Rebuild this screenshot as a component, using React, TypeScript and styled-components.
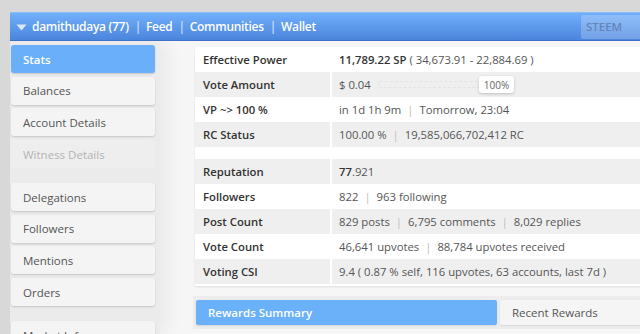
import React from "react";
import styled, { createGlobalStyle } from "styled-components";

const Global = createGlobalStyle`
  html, body { margin: 0; padding: 0; overflow: hidden; }
  body {
    background: #d8d8d8;
    font-family: "Open Sans", "Noto Sans", Arial, sans-serif;
    font-size: 11.3px;
    color: #555;
  }
`;

const Page = styled.div`
  padding: 12px 0 0 10px;
  width: 795px;
`;

const Header = styled.header`
  height: 29px;
  display: flex;
  align-items: center;
  background: linear-gradient(#72affb, #4a85dc);
  border-top: 1px solid #8cbcf6;
  border-bottom: 1px solid #3f72c8;
  color: #fff;
  font-weight: 600;
  font-size: 12px;
  letter-spacing: -0.3px;
  padding-left: 6px;
  box-sizing: border-box;
`;

const Caret = styled.svg`
  width: 11px;
  height: 7px;
  margin-right: 5px;
  margin-top: 1px;
`;

const NavSep = styled.span`
  margin: 0 5px 0 6px;
  font-weight: 400;
  color: #e4eefc;
`;

const SteemBtn = styled.div`
  margin-left: 265px;
  height: 24px;
  width: 80px;
  display: flex;
  align-items: center;
  padding-left: 5px;
  box-sizing: border-box;
  background: rgba(255, 255, 255, 0.22);
  border-radius: 2px;
  color: #6585bb;
  font-weight: 600;
  letter-spacing: 0;
  font-size: 11.5px;
`;

const Body = styled.div`
  display: flex;
  background: #f6f6f6;
  height: calc(100vh - 41px);
  overflow: hidden;
`;

const Sidebar = styled.nav`
  width: 150px;
  flex: 0 0 150px;
  background: #ebebeb;
  padding: 4px 5px 0 1px;
  box-sizing: border-box;
  box-shadow: 8px 0 16px rgba(0, 0, 0, 0.05);
  display: flex;
  flex-direction: column;
`;

const Group = styled.div`
  display: flex;
  flex-direction: column;
  gap: 3.7px;
  margin-bottom: 15px;
`;

const SideBtn = styled.div<{ $active?: boolean; $disabled?: boolean }>`
  height: 28px;
  flex: 0 0 28px;
  display: flex;
  align-items: center;
  padding-left: 12px;
  border-radius: 3px;
  font-size: 11.5px;
  background: ${(p) => (p.$active ? "#6aaff9" : p.$disabled ? "#eeeeee" : "#f4f4f4")};
  color: ${(p) => (p.$active ? "#fff" : p.$disabled ? "#b3b3b3" : "#555")};
  font-weight: ${(p) => (p.$active ? 600 : 400)};
  box-shadow: ${(p) => (p.$disabled ? "none" : "0 1px 2px rgba(0,0,0,0.16)")};
`;

const Main = styled.main`
  flex: 1;
  padding: 6px 0 0 35px;
  display: flex;
  flex-direction: column;
`;

const Card = styled.div`
  background: #fff;
  box-shadow: 0 1px 2px rgba(0, 0, 0, 0.1);
  padding-bottom: 2px;
`;

const Row = styled.div<{ $grey?: boolean }>`
  display: grid;
  grid-template-columns: 137px 1fr;
  height: 25px;
  background: ${(p) => (p.$grey ? "#efefef" : "#fff")};
`;

const Spacer = styled.div`
  height: 12px;
`;

const Label = styled.div`
  display: flex;
  align-items: center;
  padding-left: 8px;
  font-weight: 600;
  color: #333;
  border-right: 2px solid #fff;
`;

const Value = styled.div`
  display: flex;
  align-items: center;
  padding-left: 7px;
  color: #555;
  white-space: pre;
`;

const Strong = styled.b`
  font-weight: 600;
  color: #333;
`;

const Pipe = styled.span`
  color: #bdbdbd;
  margin: 0 6px;
`;

const VoteBar = styled.div`
  display: flex;
  align-items: center;
  margin-left: 7px;
`;

const Track = styled.div`
  width: 100px;
  height: 5px;
  border: 1px dashed #e2e2e2;
  border-radius: 2px;
`;

const Knob = styled.div`
  height: 17px;
  padding: 0 5px;
  margin-left: -1px;
  display: flex;
  align-items: center;
  background: #fff;
  border-radius: 3px;
  box-shadow: 0 1px 3px rgba(0, 0, 0, 0.2);
  font-size: 10px;
  color: #666;
`;

const Tabs = styled.div`
  margin-top: 10px;
  margin-left: -2px;
  background: #ededed;
  padding: 4px 3px;
  display: flex;
  gap: 3px;
`;

const Tab = styled.div<{ $active?: boolean }>`
  flex: 0 0 301px;
  height: 25px;
  display: flex;
  align-items: center;
  padding-left: 12px;
  box-sizing: border-box;
  border-radius: 2px;
  font-size: 11.5px;
  background: ${(p) => (p.$active ? "#6ab1fa" : "#f5f5f5")};
  color: ${(p) => (p.$active ? "#fff" : "#555")};
  font-weight: ${(p) => (p.$active ? 600 : 400)};
  box-shadow: 0 1px 2px rgba(0, 0, 0, 0.1);
`;

const Sep = () => <Pipe>|</Pipe>;

export default function App() {
  return (
    <>
      <Global />
      <Page>
        <Header>
          <Caret viewBox="0 0 11 7">
            <path d="M0.5 0.5 L10.5 0.5 L5.5 6.5 Z" fill="#dbe7f9" />
          </Caret>
          <span>damithudaya (77)</span>
          <NavSep>|</NavSep>
          <span>Feed</span>
          <NavSep>|</NavSep>
          <span>Communities</span>
          <NavSep>|</NavSep>
          <span>Wallet</span>
          <SteemBtn>STEEM</SteemBtn>
        </Header>
        <Body>
          <Sidebar>
            <Group>
              <SideBtn $active>Stats</SideBtn>
              <SideBtn>Balances</SideBtn>
              <SideBtn>Account Details</SideBtn>
              <SideBtn $disabled>Witness Details</SideBtn>
            </Group>
            <Group>
              <SideBtn>Delegations</SideBtn>
              <SideBtn>Followers</SideBtn>
              <SideBtn>Mentions</SideBtn>
              <SideBtn>Orders</SideBtn>
            </Group>
            <Group>
              <SideBtn>Market Info</SideBtn>
            </Group>
          </Sidebar>
          <Main>
            <Card>
              <Row>
                <Label>Effective Power</Label>
                <Value>
                  <Strong>11,789.22 SP</Strong> ( 34,673.91 - 22,884.69 )
                </Value>
              </Row>
              <Row $grey>
                <Label>Vote Amount</Label>
                <Value>
                  $ 0.04
                  <VoteBar>
                    <Track />
                    <Knob>100%</Knob>
                  </VoteBar>
                </Value>
              </Row>
              <Row>
                <Label>VP ~&gt; 100 %</Label>
                <Value>
                  in 1d 1h 9m<Sep />Tomorrow, 23:04
                </Value>
              </Row>
              <Row $grey>
                <Label>RC Status</Label>
                <Value>
                  100.00 %<Sep />19,585,066,702,412 RC
                </Value>
              </Row>
              <Spacer />
              <Row $grey>
                <Label>Reputation</Label>
                <Value>
                  <Strong>77</Strong>.921
                </Value>
              </Row>
              <Row>
                <Label>Followers</Label>
                <Value>
                  822<Sep />963 following
                </Value>
              </Row>
              <Row $grey>
                <Label>Post Count</Label>
                <Value>
                  829 posts<Sep />6,795 comments<Sep />8,029 replies
                </Value>
              </Row>
              <Row>
                <Label>Vote Count</Label>
                <Value>
                  46,641 upvotes<Sep />88,784 upvotes received
                </Value>
              </Row>
              <Row $grey>
                <Label>Voting CSI</Label>
                <Value>9.4 ( 0.87 % self, 116 upvotes, 63 accounts, last 7d )</Value>
              </Row>
            </Card>
            <Tabs>
              <Tab $active>Rewards Summary</Tab>
              <Tab>Recent Rewards</Tab>
            </Tabs>
          </Main>
        </Body>
      </Page>
    </>
  );
}
